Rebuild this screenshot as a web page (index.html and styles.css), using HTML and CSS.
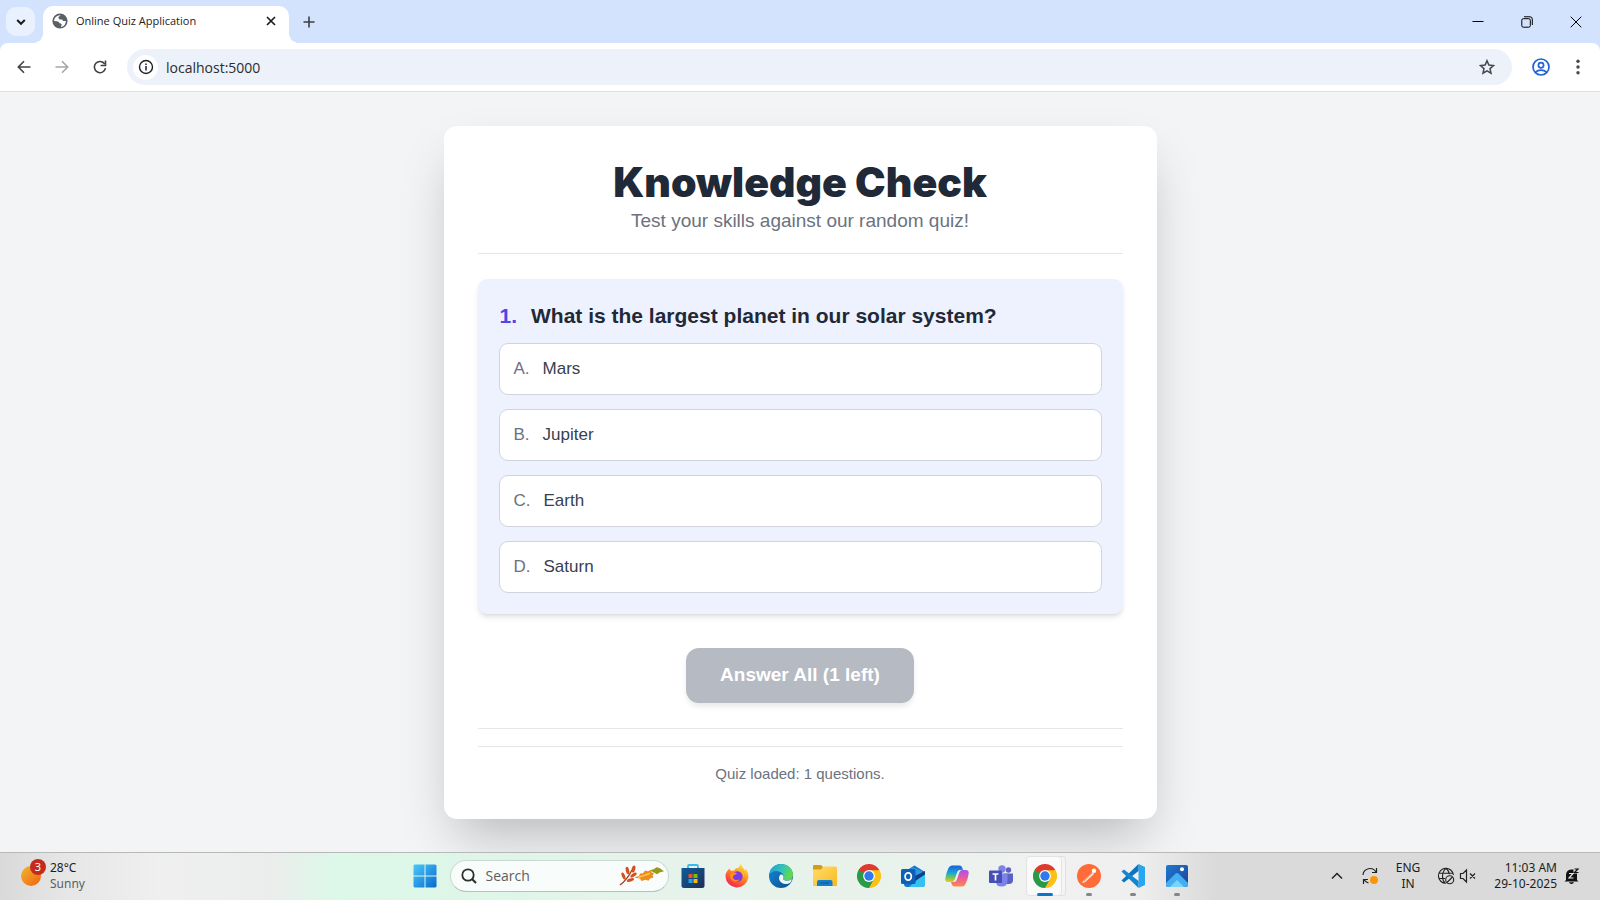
FILE: index.html
```html
<!DOCTYPE html>
<html lang="en">
<head>
<meta charset="utf-8">
<title>Online Quiz Application</title>
<link rel="stylesheet" href="styles.css">
</head>
<body>
<svg class="defs" width="0" height="0" aria-hidden="true">
  <defs>
    <linearGradient id="gWin" x1="0" y1="0" x2="1" y2="1"><stop offset="0" stop-color="#4cc9fb"/><stop offset="1" stop-color="#0869cf"/></linearGradient>
    <linearGradient id="gSun" x1="0" y1="0" x2="1" y2="1"><stop offset="0" stop-color="#f2b632"/><stop offset="1" stop-color="#f0620e"/></linearGradient>
    <linearGradient id="gStore" x1="0" y1="0" x2="1" y2="1"><stop offset="0" stop-color="#0f5c9c"/><stop offset="1" stop-color="#1f2f57"/></linearGradient>
    <linearGradient id="gFox" x1=".8" y1="0" x2=".2" y2="1"><stop offset="0" stop-color="#fff04a"/><stop offset=".45" stop-color="#ff8a1c"/><stop offset="1" stop-color="#f0165a"/></linearGradient>
    <linearGradient id="gEdgeTop" x1="0" y1="0" x2="1" y2=".3"><stop offset="0" stop-color="#1b9de2"/><stop offset=".6" stop-color="#35c6b0"/><stop offset="1" stop-color="#62d84e"/></linearGradient>
    <linearGradient id="gEdgeBot" x1="0" y1="0" x2="1" y2="1"><stop offset="0" stop-color="#1589dc"/><stop offset="1" stop-color="#0d4a8c"/></linearGradient>
    <linearGradient id="gFolder" x1="0" y1="0" x2="1" y2="1"><stop offset="0" stop-color="#ffdd6b"/><stop offset="1" stop-color="#f8b91f"/></linearGradient>
    <linearGradient id="gCopA" x1="0" y1="0" x2="0" y2="1"><stop offset="0" stop-color="#1c5fd8"/><stop offset=".45" stop-color="#17a7d8"/><stop offset=".75" stop-color="#7bc74a"/><stop offset="1" stop-color="#f6c81e"/></linearGradient>
    <linearGradient id="gCopB" x1="0" y1="0" x2="0" y2="1"><stop offset="0" stop-color="#a754f0"/><stop offset=".5" stop-color="#ec5b9a"/><stop offset="1" stop-color="#fb8b4b"/></linearGradient>
    <linearGradient id="gPhoto" x1="0" y1="0" x2="1" y2="1"><stop offset="0" stop-color="#1c7ad2"/><stop offset="1" stop-color="#1f3f94"/></linearGradient>
    <g id="chromeLogo">
      <circle cx="12" cy="12" r="12" fill="#fff"/>
      <path d="M12 12 1.6 6A12 12 0 0 1 22.4 6Z" fill="#df3a30"/>
      <path d="M12 12 22.4 6A12 12 0 0 1 12 24Z" fill="#fbc116"/>
      <path d="M12 12 12 24A12 12 0 0 1 1.6 6Z" fill="#2a9a48"/>
      <path d="M12 6.2H22.5L17 14.8Z" fill="#fbc116"/>
      <path d="M17.2 14.8 12 24 9 16Z" fill="#2a9a48"/>
      <path d="M1.6 6 7 15 12 6Z" fill="#2a9a48"/><path d="M1.6 6.1 6.4 2h6v4.4L7 9Z" fill="#df3a30"/>
      <circle cx="12" cy="12" r="5.9" fill="#fff"/><circle cx="12" cy="12" r="4.7" fill="#3079ee"/>
    </g>
  </defs>
</svg>

<header class="browser">
  <div class="tabstrip">
    <button class="tab-search" aria-label="Search tabs"><svg width="12" height="12" viewBox="0 0 12 12"><path d="M2.2 4 6 7.8 9.8 4" fill="none" stroke="#1b1c1e" stroke-width="2"/></svg></button>
    <div class="tab">
      <svg width="16" height="16" viewBox="0 0 16 16"><circle cx="8" cy="8" r="7.6" fill="#5b6065"/><path d="M8.4 2.2c-.2 1.2-1.8 1-2 2.2-.2 1 1 1 1 2H9.8c1 .2.8 1.6 1.8 1.6h2.2A6 6 0 0 1 9 13.900c0-1.300 1-1.600.6-2.600-.4-.9-1.800-.5-2.200-1.300C7 9 6 8.200 4.600 8.200L2 8A6 6 0 0 1 8.400 2.200Z" fill="#fff"/></svg>
      <span class="tab-title">Online Quiz Application</span>
      <button class="tab-close" aria-label="Close tab"><svg width="12" height="12" viewBox="0 0 12 12"><path d="M2 2l8 8M10 2l-8 8" stroke="#1b1c1e" stroke-width="1.700"/></svg></button>
    </div>
    <button class="new-tab" aria-label="New tab"><svg width="12" height="12" viewBox="0 0 12 12"><path d="M6 .5v11M.5 6h11" stroke="#3c4043" stroke-width="1.600"/></svg></button>
    <div class="window-controls">
      <button aria-label="Minimize"><svg width="12" height="12" viewBox="0 0 12 12"><path d="M.5 5.500h11" stroke="#000"/></svg></button>
      <button aria-label="Restore"><svg width="12" height="12" viewBox="0 0 12 12" fill="none" stroke="#000"><rect x=".8" y="2.700" width="8.500" height="8.500" rx="1.500"/><path d="M3 .8h6a2.300 2.300 0 0 1 2.300 2.300V9"/></svg></button>
      <button aria-label="Close"><svg width="12" height="12" viewBox="0 0 12 12"><path d="M.7.7l10.600 10.600M11.300.7.7 11.300" stroke="#000"/></svg></button>
    </div>
  </div>
  <div class="toolbar">
    <nav class="nav-buttons">
      <button aria-label="Back"><svg width="14" height="14" viewBox="0 0 14 14" fill="none" stroke="#3f4246" stroke-width="1.600"><path d="M13.500 7H1.500M7 1.200 1.300 7 7 12.800"/></svg></button>
      <button aria-label="Forward"><svg width="14" height="14" viewBox="0 0 14 14" fill="none" stroke="#a4a6a9" stroke-width="1.600"><path d="M.5 7h12M7 1.200 12.700 7 7 12.800"/></svg></button>
      <button aria-label="Reload"><svg width="14" height="14" viewBox="0 0 14 14"><path d="M11.700 4A5.600 5.600 0 1 0 12.500 8.200" fill="none" stroke="#3f4246" stroke-width="1.600"/><path d="M13.300.6v5.700H7.600V4.700h4.100V.6Z" fill="#3f4246"/></svg></button>
    </nav>
    <div class="omnibox">
      <button class="site-info" aria-label="Site information"><svg width="16" height="16" viewBox="0 0 16 16"><circle cx="8" cy="8" r="6.500" fill="none" stroke="#1f2124" stroke-width="1.400"/><path d="M8 7v4.500M8 4.400v1.700" stroke="#1f2124" stroke-width="1.500"/></svg></button>
      <input class="address" aria-label="Address" value="localhost:5000">
      <button class="plain" aria-label="Bookmark"><svg width="16" height="16" viewBox="0 0 18 18"><path d="M9 1.900l2.100 4.900 5.200.5-3.900 3.500 1.100 5.200L9 13.300 4.500 16l1.100-5.200-3.900-3.500 5.200-.5Z" fill="none" stroke="#45484c" stroke-width="1.700"/></svg></button>
    </div>
    <button class="plain" aria-label="Profile"><svg width="18" height="18" viewBox="0 0 18 18" fill="none" stroke="#1f63d6" stroke-width="1.700"><circle cx="9" cy="9" r="8"/><circle cx="9" cy="7.300" r="2.600"/><path d="M3.300 14.300c3-3 8.400-3 11.400 0"/></svg></button>
    <button class="plain menu" aria-label="Menu"><svg width="4" height="16" viewBox="0 0 4 16" fill="#45484c"><circle cx="2" cy="2.300" r="1.700"/><circle cx="2" cy="8" r="1.700"/><circle cx="2" cy="13.700" r="1.700"/></svg></button>
  </div>
</header>

<main class="page">
  <section class="card">
    <div class="card-head">
      <h1>Knowledge Check</h1>
      <p>Test your skills against our random quiz!</p>
    </div>
    <div class="question">
      <h2><span class="number">1.</span><span>What is the largest planet in our solar system?</span></h2>
      <div class="options">
        <button class="option"><span class="letter">A.</span><span>Mars</span></button>
        <button class="option"><span class="letter">B.</span><span>Jupiter</span></button>
        <button class="option"><span class="letter">C.</span><span>Earth</span></button>
        <button class="option"><span class="letter">D.</span><span>Saturn</span></button>
      </div>
    </div>
    <div class="actions"><button class="submit" disabled>Answer All (1 left)</button></div>
    <footer class="status"><p>Quiz loaded: 1 questions.</p></footer>
  </section>
</main>

<footer class="taskbar">
  <button class="weather">
    <span class="sun"><svg width="20" height="20" viewBox="0 0 20 20"><circle cx="10" cy="10" r="10" fill="url(#gSun)"/></svg><span class="badge">3</span></span>
    <span class="two-lines"><span>28°C</span><span class="muted">Sunny</span></span>
  </button>
  <div class="apps">
    <button class="app" aria-label="Start"><svg width="24" height="24" viewBox="0 0 24 24"><path d="M1.500.5h10v11H.5v-10ZM12.500.5h10l1 1v10h-11ZM.5 12.500h11v11h-10l-1-1ZM12.500 12.500h11v10l-1 1h-10Z" fill="url(#gWin)"/></svg></button>
    <label class="search">
      <svg width="16" height="16" viewBox="0 0 16 16" fill="none" stroke="#2c2f2e"><circle cx="7" cy="7" r="5.700" stroke-width="1.800"/><path d="M11 11l4 4" stroke-width="2.200"/></svg>
      <input aria-label="Search" placeholder="Search">
      <svg width="46" height="22" viewBox="0 0 46 22">
        <path d="M1 20Q8 15 13 5" fill="none" stroke="#a8391c" stroke-width="1.300"/>
        <g fill="#d4511f"><ellipse cx="14.500" cy="4" rx="1.800" ry="3.600" transform="rotate(15 14.500 4)"/><ellipse cx="8.500" cy="5.500" rx="1.700" ry="3.800" transform="rotate(-12 8.500 5.500)"/><ellipse cx="4.500" cy="11" rx="1.600" ry="3.800" transform="rotate(-22 4.500 11)"/><ellipse cx="14.500" cy="10" rx="1.600" ry="3.700" transform="rotate(55 14.500 10)"/><ellipse cx="11.500" cy="15" rx="1.600" ry="3.700" transform="rotate(72 11.500 15)"/></g>
        <path d="M15 12.500l5-1.500 1-2.500 3-.3 2-2.700 3 .8 3-1.300.5 2.500 2.500.6-1.500 2.400 1 2-3.500 1-1.500 2.300-3-1-4 1.200-1.500-2.400Z" fill="#f08b1c"/><path d="M19 12.500 31 8.500" stroke="#fbc64b" stroke-width="1.400"/>
        <path d="M31 5.500l4-1.500 2.500-1.800 3 .8 4.500 3.200-4.500 1.400-2.500 1.600-3-1.700Z" fill="#969a18"/>
      </svg>
    </label>
    <button class="app" aria-label="Microsoft Store"><svg width="24" height="24" viewBox="0 0 24 24"><path d="M7 6V2.200Q7 1 8.200 1h7.600Q17 1 17 2.200V6" fill="none" stroke="#3bb8ef" stroke-width="1.800"/><path d="M.5 4h23v17.500q0 2.500-2.500 2.500H3Q.5 24 .5 21.500Z" fill="url(#gStore)"/><path d="M7.500 10h4v4h-4z" fill="#f25022"/><path d="M12.500 10h4v4h-4z" fill="#7fba00"/><path d="M7.500 15h4v4h-4z" fill="#20a4ee"/><path d="M12.500 15h4v4h-4z" fill="#ffb900"/></svg></button>
    <button class="app" aria-label="Firefox"><svg width="24" height="24" viewBox="0 0 24 24"><path d="M4.500 4.500 6 7l3.500-.8C11 3.500 12 5 14 3c.5-1 1-2 1.800-3 1 2.500 3.500 4.500 4.200 6.500l1-1.500c2 3 2.800 6 2.300 9A11.500 11.500 0 0 1 .5 12.500C.5 9.500 1.500 8 2.500 6.800Z" fill="url(#gFox)"/><circle cx="12.300" cy="12.500" r="5.300" fill="#7a3be0"/><path d="M5 10c2-2.500 4.500-2 7-.8-1 1.600-3 1.300-3.700 3C7 14.500 10 17 14.500 15.500 12 19.500 4.500 18 5 10Z" fill="#ff8a1f"/><path d="M12 6.500c4-.5 6.500 2.500 6 7 2-3 1-7-1.500-9Z" fill="#ffb52b"/></svg></button>
    <button class="app" aria-label="Edge"><svg width="24" height="24" viewBox="0 0 24 24"><circle cx="12" cy="12" r="12" fill="url(#gEdgeBot)"/><path d="M.5 10C2 4 6 0 12 0c7 0 12 5 12 10.500 0 4-3 6-6 6-2.500 0-4.500-.8-4-2 1.200-1.600.8-3.600-.6-5C10.200 6.300 4 6 .5 10Z" fill="url(#gEdgeTop)"/><path d="M14 14.500c-.5 1.200 1.500 2.200 4 2.200 2 0 4-.7 5-2-.2 1.600-.9 3-1.700 4.100-2.500 1.500-6 1.700-8.300.2-3.500-2.200-3.800-6-1.500-8.500 2.500-.2 4 1.700 2.500 4Z" fill="#edf5f0"/></svg></button>
    <button class="app" aria-label="File Explorer"><svg width="24" height="24" viewBox="0 0 24 24"><path d="M0 3h9.500L12 2.500h10.500Q24 2.500 24 4v18H0Z" fill="url(#gFolder)"/><path d="M0 2q0-1 1-1h7l2 2-2 2.500H0Z" fill="#d89a12"/><path d="M4 22v-4q0-2 2-2h11.500q2 0 2 2v4Z" fill="#167dcb"/><path d="M7.500 19h8.500" stroke="#0d5b9d" stroke-width="1.200"/></svg></button>
    <button class="app" aria-label="Chrome"><svg width="24" height="24" viewBox="0 0 24 24"><use href="#chromeLogo"/></svg></button>
    <button class="app" aria-label="Outlook"><svg width="24" height="24" viewBox="0 0 24 24"><path d="M3 8 13.500 1.500 24 8v12q0 3-3 3H6q-3 0-3-3Z" fill="#1674c9"/><path d="M12 3.500 21 7v8H8V6Z" fill="#2f97e0"/><path d="M24 9v11q0 3-3 3H8Z" fill="#32c3f3"/><path d="M24 7v3.500L14 17V12Z" fill="#133f88"/><rect x="0" y="5" width="14.500" height="15" rx="1.500" fill="#0e5fb6"/><ellipse cx="7.200" cy="12.500" rx="3.100" ry="3.600" fill="none" stroke="#fff" stroke-width="1.800"/></svg></button>
    <button class="app" aria-label="Copilot"><svg width="24" height="24" viewBox="0 0 24 24"><path d="M7 1.500h7.500q2 0 2.700 2L18 6h-3q-2 0-2.700 2L9.500 16q-.8 2-2.800 2H3Q0 18 .3 14.500 1 9 3.500 4 4.700 1.500 7 1.500Z" fill="url(#gCopA)"/><path d="M17 22.500H9.500q-2 0-2.700-2L6 18h3q2 0 2.700-2L14.500 8q.8-2 2.800-2H21q3 0 2.700 3.500-.7 5.500-3.200 10.500-1.200 2.500-3.500 2.500Z" fill="url(#gCopB)"/></svg></button>
    <button class="app" aria-label="Teams"><svg width="24" height="24" viewBox="0 0 24 24"><circle cx="19.500" cy="6" r="2.700" fill="#5a62c3"/><circle cx="13" cy="5" r="3.700" fill="#7b83eb"/><path d="M15 9.500h9V16q0 4-4 4h-5Z" fill="#5a62c3"/><path d="M7 9.500h11.500V17q0 5.500-6 5.500T7 17Z" fill="#7b83eb"/><rect x="0" y="6.500" width="13" height="12.500" rx="1" fill="#464eb8"/><path d="M3.500 10h6M6.500 10v6.500" stroke="#fff" stroke-width="1.700"/></svg></button>
    <button class="app active" aria-label="Chrome, running"><svg width="24" height="24" viewBox="0 0 24 24"><use href="#chromeLogo"/></svg></button>
    <button class="app running" aria-label="Postman"><svg width="24" height="24" viewBox="0 0 24 24"><circle cx="12" cy="12" r="12" fill="#ff6c37"/><circle cx="17" cy="6.800" r="2.200" fill="#fff"/><path d="M15.500 8 6 17l-1 2 3-.8L17 10Z" fill="#ffe6db"/><path d="M15 9 7 16.800" stroke="#ff6c37" stroke-width=".7"/></svg></button>
    <button class="app running" aria-label="Visual Studio Code"><svg width="24" height="24" viewBox="0 0 24 24"><path d="M17.500 0 24 3v18l-6.500 3Z" fill="#2aa5f0"/><path d="M17.500 0v7L3 18.500l-2.500-2Z" fill="#0d74bd"/><path d="M17.500 24v-7L3 5.500l-2.500 2Z" fill="#1485cf"/></svg></button>
    <button class="app running" aria-label="Photos"><svg width="24" height="24" viewBox="0 0 24 24"><rect x="1" y="1" width="22" height="22" rx="2" fill="url(#gPhoto)"/><path d="M1 19 10.300 9.700q1.700-1.400 3.400 0L23 19v2q0 2-2 2H3q-2 0-2-2Z" fill="#45aef2"/><path d="M5 23l7-7 7 7Z" fill="#7ad3f8"/><circle cx="17" cy="5.200" r="2" fill="#fff"/></svg></button>
  </div>
  <div class="tray">
    <button aria-label="Show hidden icons"><svg width="14" height="14" viewBox="0 0 14 14"><path d="M2 9.500 7 4.500l5 5" fill="none" stroke="#222" stroke-width="1.500"/></svg></button>
    <button aria-label="Update available"><svg width="18" height="18" viewBox="0 0 18 18" fill="none" stroke="#222" stroke-width="1.200"><path d="M2 8a7 7 0 0 1 13-3M15.500 1v4.500H11M7.500 16A7 7 0 0 1 3 12.500M2.500 17v-4.500H7"/><circle cx="13" cy="13" r="4" fill="#ff9500" stroke="none"/></svg></button>
    <button class="two-lines centered"><span>ENG</span><span>IN</span></button>
    <button class="pair" aria-label="Network and sound">
      <svg width="18" height="18" viewBox="0 0 18 18" fill="none" stroke="#222" stroke-width="1.100"><path d="M9 16.300A7.500 7.500 0 1 1 16.400 8M1.500 6.200h14.600M1.500 11.500H8M9 1.300C4.500 5 4.500 12.500 8 16M9 1.300c2 1.600 3 3.800 3.300 6"/><circle cx="12.700" cy="12.700" r="4"/><path d="M10 15.500 15.500 10"/></svg>
      <svg width="18" height="18" viewBox="0 0 18 18" fill="none" stroke="#222" stroke-width="1.200"><path d="M1.500 6.500H4L7.500 3v12L4 11.500H1.500ZM11 6.500l5 5M16 6.500l-5 5"/></svg>
    </button>
    <button class="two-lines ended"><span>11:03 AM</span><span>29-10-2025</span></button>
    <button class="bell" aria-label="Notifications"><svg width="16" height="16" viewBox="0 0 16 16"><path d="M2 12V6.500Q2.500 2 7 1.500h2.500V5.500H13V12l1.500 1.500H.5ZM5 14.300h5Q9.500 16 7.500 16T5 14.300Z" fill="#111"/><path d="M5 5.500h4L5 10h4.500" fill="none" stroke="#e6e6e6" stroke-width="1.200"/><path d="M10.500 1h3.500l-3.500 3.500H14.500" fill="none" stroke="#111" stroke-width="1.200"/></svg></button>
  </div>
</footer>
</body>
</html>
```
FILE: styles.css
```css
* { box-sizing: border-box; }
html, body { height: 100%; }
body {
  margin: 0;
  display: flex;
  flex-direction: column;
  font-family: "Liberation Sans", Arial, sans-serif;
  background: #f3f4f6;
}
h1, h2, p { margin: 0; }
button {
  border: 0;
  padding: 0;
  background: none;
  font: inherit;
  color: inherit;
}
input { border: 0; padding: 0; background: none; outline: 0; min-width: 0; }
svg { display: block; flex: none; }
.defs { position: absolute; }

/* Browser frame */
.browser {
  flex: none;
  background: #d3e3fd;
  font-family: "Open Sans", "Noto Sans", sans-serif;
}
.tabstrip {
  height: 43px;
  display: flex;
  align-items: center;
  padding-left: 6px;
}
.tab-search {
  width: 29px;
  height: 29px;
  border-radius: 10px;
  background: #e9f1fe;
  display: grid;
  place-items: center;
}
.tab {
  position: relative;
  width: 246px;
  height: 37px;
  margin: 6px 0 0 8px;
  padding: 0 12px 8px 9px;
  border-radius: 10px 10px 0 0;
  background: #fff;
  display: flex;
  align-items: center;
}
.tab::before, .tab::after {
  content: "";
  position: absolute;
  bottom: 0;
  width: 10px;
  height: 10px;
}
.tab::before { right: 100%; background: radial-gradient(circle at 0 0, transparent 10px, #fff 10px); }
.tab::after { left: 100%; background: radial-gradient(circle at 100% 0, transparent 10px, #fff 10px); }
.tab-title {
  flex: 1;
  margin-left: 8px;
  font-size: 11px;
  color: #1f2124;
}
.new-tab { margin-left: 14px; }
.window-controls { margin-left: auto; display: flex; height: 100%; }
.window-controls button { width: 49px; display: grid; place-items: center; }
.toolbar {
  height: 49px;
  display: flex;
  align-items: center;
  padding: 0 20px 0 17px;
  background: #fff;
  border-bottom: 1px solid #dfe1e5;
  border-radius: 8px 8px 0 0;
}
.nav-buttons { display: flex; gap: 24px; margin-right: 20px; }
.omnibox {
  flex: 1;
  height: 36px;
  border-radius: 18px;
  background: #edf1fa;
  display: flex;
  align-items: center;
  padding: 0 17px 0 6px;
  margin-right: 20px;
}
.site-info {
  width: 25px;
  height: 25px;
  border-radius: 50%;
  background: #fff;
  display: grid;
  place-items: center;
}
.address {
  flex: 1;
  margin-left: 8px;
  font-family: inherit;
  font-size: 14px;
  color: #2a2c30;
}
.menu { margin-left: 26px; }

/* Quiz page */
.page {
  flex: 1;
  display: flex;
  justify-content: center;
  align-items: flex-start;
  padding: 34px 16px;
  overflow: hidden;
}
.card {
  width: 100%;
  max-width: 713px;
  padding: 34px;
  border-radius: 13px;
  background: #fff;
  box-shadow: 0 26px 53px -12px rgba(0, 0, 0, .25);
}
.card-head {
  padding-bottom: 16px;
  margin-bottom: 25px;
  border-bottom: 1px solid #e5e7eb;
  text-align: center;
}
h1 {
  font-family: "Arial Black", Inter, sans-serif;
  font-size: 41px;
  line-height: 45px;
  font-weight: 900;
  color: #1f2937;
}
.card-head p { font-size: 19px; line-height: 32px; color: #6b7280; }
.question {
  padding: 21px;
  border-radius: 9px;
  background: #eef2ff;
  box-shadow: 0 4px 6px -1px rgba(0, 0, 0, .1), 0 2px 4px -2px rgba(0, 0, 0, .1);
}
h2 {
  display: flex;
  gap: 14px;
  margin-bottom: 11px;
  padding-left: 1px;
  font-size: 21px;
  line-height: 32px;
  color: #1f2937;
}
.number { color: #4f46e5; }
.options { display: grid; gap: 14px; }
.option {
  display: flex;
  align-items: center;
  gap: 13px;
  height: 52px;
  padding: 0 14px;
  border: 1px solid #d1d5db;
  border-radius: 9px;
  background: #fff;
  font-size: 17px;
  color: #374151;
}
.letter { color: #6b7280; }
.actions {
  display: flex;
  justify-content: center;
  padding: 34px 0 25px;
  border-bottom: 1px solid #e5e7eb;
}
.submit {
  height: 55px;
  padding: 0 34px 2px;
  border-radius: 13px;
  background: #b5bac3;
  box-shadow: 0 4px 6px -1px rgba(0, 0, 0, .1);
  font-size: 19px;
  font-weight: 700;
  color: #fff;
}
.status {
  margin-top: 17px;
  padding-top: 16px;
  border-top: 1px solid #e5e7eb;
  text-align: center;
  font-size: 15px;
  line-height: 22px;
  color: #6b7280;
}

/* Taskbar */
.taskbar {
  position: relative;
  flex: none;
  height: 48px;
  display: grid;
  grid-template-columns: 1fr auto 1fr;
  align-items: center;
  padding: 0 0 2px 1px;
  border-top: 1px solid #b6b9b8;
  background: linear-gradient(90deg, #d9d9d9 0, #e6e6e6 4%, #efeff0 10%, #ebedec 17%, #dcf8e9 21%, #ddf6e8 28%, #e6f3eb 42%, #e9f2ec 57%, #f0f1f0 65%, #efefef 71%, #dadada 76%);
  font-family: "Noto Sans", "Open Sans", sans-serif;
  font-size: 12px;
  line-height: 16px;
  color: #1c1c1c;
}
.weather { display: flex; align-items: center; gap: 9px; padding-left: 20px; text-align: left; }
.sun { position: relative; }
.badge {
  position: absolute;
  right: -5px;
  top: -7px;
  width: 16px;
  height: 16px;
  border-radius: 50%;
  background: #c42b1c;
  color: #fff;
  font-size: 11px;
  text-align: center;
}
.two-lines { display: flex; flex-direction: column; }
.centered { align-items: center; }
.ended { align-items: flex-end; text-align: right; }
.muted { color: #5c5e5e; }
.apps { display: flex; align-items: center; }
.app {
  position: relative;
  width: 44px;
  height: 40px;
  display: grid;
  place-items: center;
}
.search {
  width: 219px;
  height: 32px;
  margin: 0 2px 0 3px;
  padding: 0 3px 0 10px;
  display: flex;
  align-items: center;
  border: 1px solid #c9dbd0;
  border-bottom-color: #b3c3b9;
  border-radius: 16px;
  background: #f8fcfa;
}
.search input {
  flex: 1;
  margin-left: 9px;
  font-family: "Open Sans", "Noto Sans", sans-serif;
  font-size: 14px;
}
.search input::placeholder { color: #5c605e; opacity: 1; }
.active::before {
  content: "";
  position: absolute;
  inset: 0 5px 0 3px;
  border: 1px solid #e3e3e3;
  border-radius: 4px;
  background: #fafafa;
  box-shadow: 4px 0 0 -1px #f5f5f5, 4px 0 0 #e0e0e0;
}
.active svg { position: relative; }
.active::after, .running::after {
  content: "";
  position: absolute;
  left: 50%;
  bottom: 0;
  width: 6px;
  height: 3px;
  margin-left: -3px;
  border-radius: 2px;
  background: #858585;
}
.active::after { width: 16px; margin-left: -8px; background: #0a74cf; }
.tray {
  display: flex;
  align-items: center;
  justify-content: flex-end;
  gap: 17px;
  padding-right: 20px;
}
.pair { display: flex; gap: 4px; }
.bell { margin-left: -10px; }
```
